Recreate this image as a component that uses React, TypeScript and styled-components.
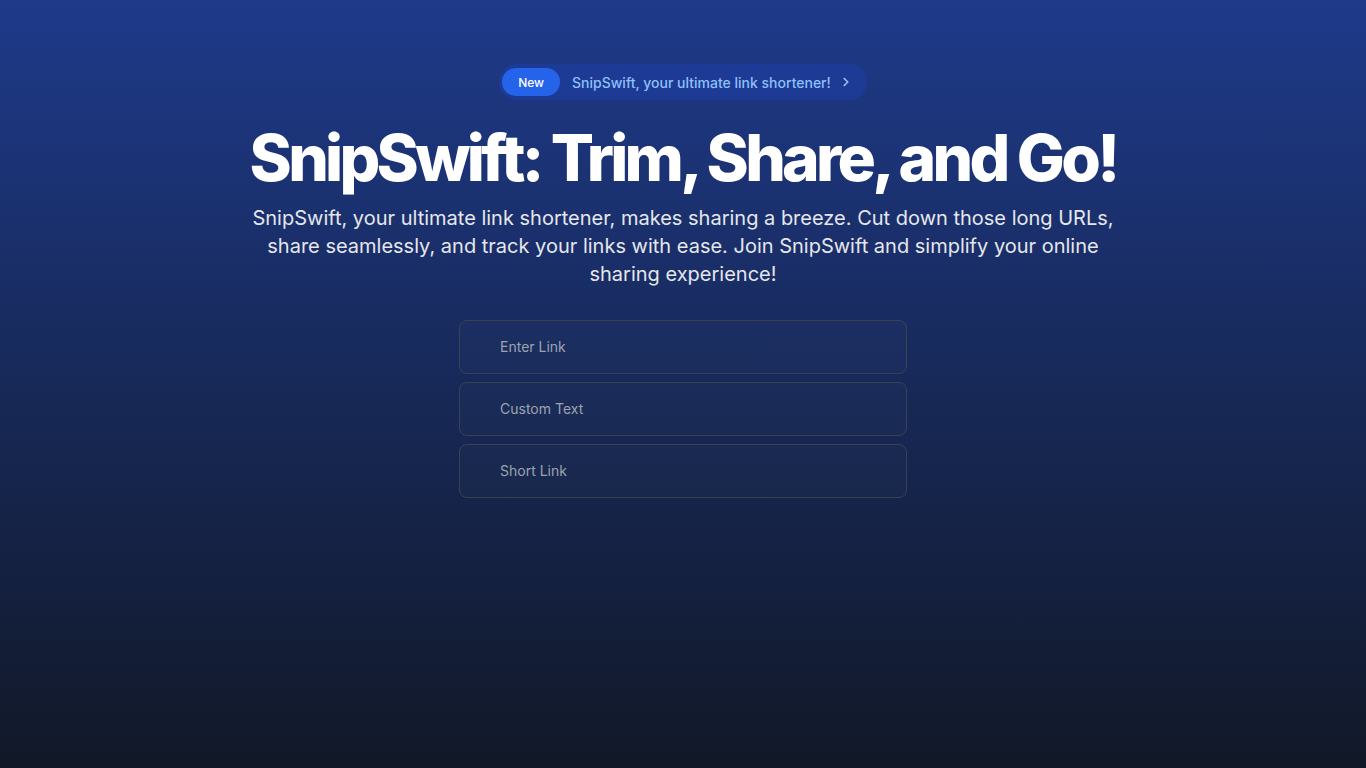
import React from "react";
import styled, { createGlobalStyle } from "styled-components";

const Global = createGlobalStyle`
  html, body { margin: 0; padding: 0; }
  body {
    font-family: Inter, "Noto Sans", sans-serif;
    background: #111827;
  }
  * { box-sizing: border-box; }
`;

const Page = styled.main`
  min-height: 100vh;
  background: linear-gradient(to bottom, #1e3a8a 0%, #111827 100%);
  display: flex;
  flex-direction: column;
  align-items: center;
  padding: 64px 16px 0;
`;

const Badge = styled.a`
  display: inline-flex;
  align-items: center;
  gap: 12px;
  height: 36px;
  padding: 4px 14px 4px 3px;
  border-radius: 999px;
  background: rgba(30, 64, 175, 0.45);
  text-decoration: none;
`;

const Pill = styled.span`
  display: inline-flex;
  align-items: center;
  justify-content: center;
  height: 28px;
  padding: 0 16px;
  border-radius: 999px;
  background: #2563eb;
  color: #fff;
  font-size: 12px;
  font-weight: 500;
`;

const BadgeText = styled.span`
  display: inline-flex;
  align-items: center;
  gap: 8px;
  color: #8ec0fb;
  font-size: 14px;
  font-weight: 500;
`;

const Title = styled.h1`
  margin: 26px 0 0;
  color: #fff;
  font-size: 64px;
  line-height: 1;
  font-weight: 800;
  letter-spacing: -0.058em;
  text-align: center;
`;

const Lead = styled.p`
  margin: 14px 0 0;
  max-width: 880px;
  color: #e5e7eb;
  font-size: 20px;
  line-height: 28px;
  text-align: center;
`;

const Form = styled.form`
  margin-top: 32px;
  width: 448px;
  display: flex;
  flex-direction: column;
  gap: 8px;
`;

const Field = styled.input`
  width: 100%;
  height: 54px;
  padding: 15px 16px 17px 40px;
  border: 1px solid #3a4252;
  border-radius: 8px;
  background: rgba(255, 255, 255, 0.015);
  color: #fff;
  font-family: Inter, "Noto Sans", sans-serif;
  font-size: 14px;
  outline: none;
  &::placeholder { color: #9ca3af; }
`;

export default function App() {
  return (
    <>
      <Global />
      <Page>
        <Badge href="#">
          <Pill>New</Pill>
          <BadgeText>
            SnipSwift, your ultimate link shortener!
            <svg width="14" height="14" viewBox="0 0 24 24" fill="none" stroke="currentColor" strokeWidth="3" strokeLinecap="round" strokeLinejoin="round">
              <path d="m9 18 6-6-6-6" />
            </svg>
          </BadgeText>
        </Badge>
        <Title>SnipSwift: Trim, Share, and Go!</Title>
        <Lead>
          SnipSwift, your ultimate link shortener, makes sharing a breeze. Cut down those long URLs, share seamlessly, and track your links with ease. Join SnipSwift and simplify your online sharing experience!
        </Lead>
        <Form onSubmit={(e) => e.preventDefault()}>
          <Field placeholder="Enter Link" />
          <Field placeholder="Custom Text" />
          <Field placeholder="Short Link" />
        </Form>
      </Page>
    </>
  );
}
